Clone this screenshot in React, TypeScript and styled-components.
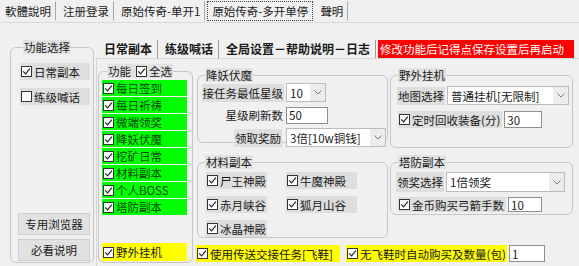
import React from "react";
import styled, { createGlobalStyle } from "styled-components";

const GlobalStyle = createGlobalStyle`
  html, body {
    margin: 0;
    padding: 0;
    background: #f0f0f0;
  }
  body {
    font-family: "Noto Sans CJK SC", "Noto Sans", sans-serif;
    font-size: 11.5px;
    line-height: 14px;
    color: #1a1a1a;
  }
`;

const Window = styled.div`
  width: 579px;
  height: 266px;
  overflow: hidden;
  display: flex;
  flex-direction: column;
`;

const TopTabs = styled.div`
  display: flex;
  height: 23px;
  box-sizing: border-box;
  border-bottom: 1px solid #dadada;
  padding-top: 1px;
`;

const TopTab = styled.div<{ $active?: boolean }>`
  display: flex;
  align-items: center;
  padding: 0 4px;
  margin-right: 2px;
  box-sizing: border-box;
  height: 20px;
  border: 1px solid ${(p) => (p.$active ? "#444" : "transparent")};
  border-style: ${(p) => (p.$active ? "dotted" : "solid")};
  border-right: 1px ${(p) => (p.$active ? "dotted #444" : "solid #a8a8a8")};
`;

const Body = styled.div`
  display: flex;
  flex: 1;
  padding-left: 10px;
  gap: 2px;
`;

const Group = styled.fieldset<{ $h: number; $w?: number }>`
  box-sizing: border-box;
  margin: 0;
  min-width: 0;
  height: ${(p) => p.$h}px;
  ${(p) => (p.$w ? `width: ${p.$w}px;` : "")}
  border: 1px solid #c6c6c6;
  border-radius: 6px;
  padding: 0 3px 0 2px;
  display: flex;
  flex-direction: column;
`;

const Legend = styled.legend`
  padding: 0 1px;
  margin-left: 5px;
  background: #e2e2e2;
  line-height: 14px;
  font-size: 11.5px;
  display: flex;
  align-items: center;
  gap: 4px;
`;

const LegendText = styled.span`
  background: #e2e2e2;
`;

const LegendCheck = styled.span`
  display: flex;
  align-items: center;
`;

const SideGroup = styled(Group)`
  margin-top: 17px;
  padding: 0 4px 1px 7px;
`;

const SideRow = styled.label`
  display: flex;
  align-items: center;
  height: 17px;
  width: 70px;
  margin: 0 0 8px 2px;
  background: #dedede;
  &:first-of-type {
    margin-top: 9px;
  }
`;

const SideButton = styled.button`
  width: 72px;
  height: 22px;
  margin-top: 4px;
  font: inherit;
  color: #1a1a1a;
  background: #e1e1e1;
  border: 1px solid #cfcfcf;
  padding: 0;
  &:first-of-type {
    margin-top: auto;
  }
`;

const RightPane = styled.div`
  flex: 1;
  margin-top: 17px;
  display: flex;
  flex-direction: column;
`;

const InnerTabs = styled.div`
  display: flex;
  height: 18px;
  align-items: stretch;
  padding-left: 3px;
`;

const InnerTab = styled.div`
  display: flex;
  align-items: center;
  padding: 0 5px;
  font-weight: bold;
  font-size: 12px;
  border-right: 1px solid #9a9a9a;
  margin-right: 2px;
`;

const Notice = styled.div`
  display: flex;
  align-items: center;
  background: #ff0000;
  color: #fff;
  padding: 0 2px;
  width: 196px;
  box-sizing: border-box;
`;

const Content = styled.div`
  flex: 1;
  display: flex;
  gap: 3px;
  border-top: 1px solid #d6d6d6;
  border-left: 1px solid #d6d6d6;
  padding: 5px 6px 0 1px;
`;

const FuncGroup = styled(Group)`
  padding: 0 4px 0 3px;
`;

const ColorRow = styled.label<{ $bg: string; $fg?: string }>`
  display: flex;
  align-items: center;
  height: 16px;
  width: 85px;
  margin-bottom: 1px;
  background: ${(p) => p.$bg};
  color: ${(p) => p.$fg || "#1a1a1a"};
  &:first-of-type {
    margin-top: 2px;
  }
`;

const BottomFuncRow = styled(ColorRow)`
  margin-top: auto;
  height: 18px;
  margin-bottom: 1px;
`;

const Main = styled.div`
  flex: 1;
  margin-top: 4px;
  display: flex;
  flex-direction: column;
`;

const GroupGrid = styled.div`
  display: grid;
  grid-template-columns: 191px 183px;
  column-gap: 2px;
  row-gap: 7px;
  align-items: start;
  margin-left: 1px;
`;

const FormGrid = styled.div<{ $cols: string; $top: number }>`
  display: grid;
  grid-template-columns: ${(p) => p.$cols};
  column-gap: 2px;
  row-gap: 4px;
  align-items: center;
  margin-top: ${(p) => p.$top}px;
`;

const FieldLabel = styled.span<{ $shade?: boolean }>`
  justify-self: end;
  padding: 0 1px;
  height: 18px;
  display: flex;
  align-items: center;
  background: ${(p) => (p.$shade ? "#dedede" : "transparent")};
`;

const Select = styled.div<{ $w: number; $h?: number }>`
  display: flex;
  align-items: stretch;
  width: ${(p) => p.$w}px;
  height: ${(p) => p.$h || 19}px;
  box-sizing: border-box;
  border: 1px solid #bcbcbc;
  background: #fff;
`;

const SelectValue = styled.span`
  flex: 1;
  display: flex;
  align-items: center;
  padding-left: 3px;
  white-space: nowrap;
  overflow: hidden;
`;

const SelectArrow = styled.span`
  width: 15px;
  display: flex;
  align-items: center;
  justify-content: center;
  background: #ececec;
`;

const TextBox = styled.div<{ $w: number; $h?: number }>`
  width: ${(p) => p.$w}px;
  height: ${(p) => p.$h || 17}px;
  box-sizing: border-box;
  border: 1px solid #8f8f8f;
  background: #fff;
  display: flex;
  align-items: center;
  padding-left: 2px;
`;

const InlineRow = styled.div<{ $top: number }>`
  display: flex;
  align-items: center;
  gap: 2px;
  margin-top: ${(p) => p.$top}px;
`;

const ShadeCheck = styled.label<{ $w?: number }>`
  display: flex;
  align-items: center;
  height: 17px;
  ${(p) => (p.$w ? `width: ${p.$w}px;` : "padding-right: 2px;")}
  background: #dedede;
`;

const CheckGrid = styled.div`
  display: grid;
  grid-template-columns: 80px 80px;
  row-gap: 7px;
  margin: 3px 0 0 6px;
`;

const BottomRow = styled.div`
  display: flex;
  align-items: center;
  gap: 6px;
  margin-top: 7px;
`;

const BottomPair = styled.span`
  display: flex;
  align-items: center;
  gap: 2px;
`;

const YellowCheck = styled.label<{ $w: number }>`
  display: flex;
  align-items: center;
  height: 17px;
  width: ${(p) => p.$w}px;
  background: #ffff00;
`;

const BoxOuter = styled.span`
  width: 11px;
  height: 11px;
  box-sizing: border-box;
  border: 1px solid #333;
  background: #fff;
  display: inline-flex;
  align-items: center;
  justify-content: center;
  flex: none;
  margin: 0 2px 0 1px;
`;

const Check: React.FC<{ on?: boolean }> = ({ on = true }) => (
  <BoxOuter>
    {on && (
      <svg width="9" height="9" viewBox="0 0 9 9">
        <path d="M1.2 4.3 L3.6 6.8 L7.9 1.6" fill="none" stroke="#222" strokeWidth="1.2" />
      </svg>
    )}
  </BoxOuter>
);

const Arrow = () => (
  <svg width="8" height="5" viewBox="0 0 8 5">
    <path d="M0.5 0.5 L4 4 L7.5 0.5" fill="none" stroke="#777" strokeWidth="1" />
  </svg>
);

const Dropdown: React.FC<{ w: number; h?: number; value: string }> = ({ w, h, value }) => (
  <Select $w={w} $h={h}>
    <SelectValue>{value}</SelectValue>
    <SelectArrow>
      <Arrow />
    </SelectArrow>
  </Select>
);

const funcs = ["每日签到", "每日祈祷", "微端领奖", "降妖伏魔", "挖矿日常", "材料副本", "个人BOSS", "塔防副本"];

const App: React.FC = () => {
  return (
    <Window>
      <GlobalStyle />
      <TopTabs>
        <TopTab>軟體說明</TopTab>
        <TopTab>注册登录</TopTab>
        <TopTab>原始传奇-单开1</TopTab>
        <TopTab $active>原始传奇-多开单停</TopTab>
        <TopTab>聲明</TopTab>
      </TopTabs>
      <Body>
        <SideGroup $h={223} $w={86}>
          <Legend>功能选择</Legend>
          <SideRow>
            <Check />
            日常副本
          </SideRow>
          <SideRow>
            <Check on={false} />
            练级喊话
          </SideRow>
          <SideButton>专用浏览器</SideButton>
          <SideButton>必看说明</SideButton>
        </SideGroup>
        <RightPane>
          <InnerTabs>
            <InnerTab>日常副本</InnerTab>
            <InnerTab>练级喊话</InnerTab>
            <InnerTab>全局设置－帮助说明－日志</InnerTab>
            <Notice>修改功能后记得点保存设置后再启动</Notice>
          </InnerTabs>
          <Content>
            <FuncGroup $h={199} $w={95}>
              <Legend>
                <LegendText>功能</LegendText>
                <LegendCheck>
                  <Check />
                  全选
                </LegendCheck>
              </Legend>
              {funcs.map((f) => (
                <ColorRow key={f} $bg="#00ff00" $fg="#0f3f0f">
                  <Check />
                  {f}
                </ColorRow>
              ))}
              <BottomFuncRow $bg="#ffff00">
                <Check />
                野外挂机
              </BottomFuncRow>
            </FuncGroup>
            <Main>
              <GroupGrid>
                <Group $h={75}>
                  <Legend>降妖伏魔</Legend>
                  <FormGrid $cols="84px auto" $top={1}>
                    <FieldLabel $shade>接任务最低星级</FieldLabel>
                    <Dropdown w={40} value="10" />
                    <FieldLabel>星级刷新数</FieldLabel>
                    <TextBox $w={42}>50</TextBox>
                    <FieldLabel $shade style={{ marginRight: 2 }}>
                      领取奖励
                    </FieldLabel>
                    <Dropdown w={100} value="3倍[10w铜钱]" />
                  </FormGrid>
                </Group>
                <Group $h={80}>
                  <Legend>野外挂机</Legend>
                  <FormGrid $cols="auto 1fr" $top={4}>
                    <FieldLabel $shade style={{ marginLeft: 4 }}>
                      地图选择
                    </FieldLabel>
                    <Dropdown w={122} value="普通挂机[无限制]" />
                  </FormGrid>
                  <InlineRow $top={6}>
                    <ShadeCheck style={{ marginLeft: 5 }}>
                      <Check />
                      定时回收装备(分)
                    </ShadeCheck>
                    <TextBox $w={38}>30</TextBox>
                  </InlineRow>
                </Group>
                <Group $h={83}>
                  <Legend>材料副本</Legend>
                  <CheckGrid>
                    <ShadeCheck $w={61}>
                      <Check />
                      尸王神殿
                    </ShadeCheck>
                    <ShadeCheck $w={71}>
                      <Check />
                      牛魔神殿
                    </ShadeCheck>
                    <ShadeCheck $w={61}>
                      <Check />
                      赤月峡谷
                    </ShadeCheck>
                    <ShadeCheck $w={71}>
                      <Check />
                      狐月山谷
                    </ShadeCheck>
                    <ShadeCheck $w={61}>
                      <Check />
                      冰晶神殿
                    </ShadeCheck>
                  </CheckGrid>
                </Group>
                <Group $h={60}>
                  <Legend>塔防副本</Legend>
                  <FormGrid $cols="auto 1fr" $top={3}>
                    <FieldLabel $shade style={{ marginLeft: 3, height: 20 }}>
                      领奖选择
                    </FieldLabel>
                    <Dropdown w={119} h={20} value="1倍领奖" />
                  </FormGrid>
                  <InlineRow $top={5}>
                    <ShadeCheck style={{ marginLeft: 5, height: 15 }}>
                      <Check />
                      金币购买弓箭手数
                    </ShadeCheck>
                    <TextBox $w={34} $h={15}>
                      10
                    </TextBox>
                  </InlineRow>
                </Group>
              </GroupGrid>
              <BottomRow>
                <YellowCheck $w={144}>
                  <Check />
                  使用传送交接任务[飞鞋]
                </YellowCheck>
                <BottomPair>
                  <YellowCheck $w={161}>
                    <Check />
                    无飞鞋时自动购买及数量(包)
                  </YellowCheck>
                  <TextBox $w={36}>1</TextBox>
                </BottomPair>
              </BottomRow>
            </Main>
          </Content>
        </RightPane>
      </Body>
    </Window>
  );
};

export default App;
